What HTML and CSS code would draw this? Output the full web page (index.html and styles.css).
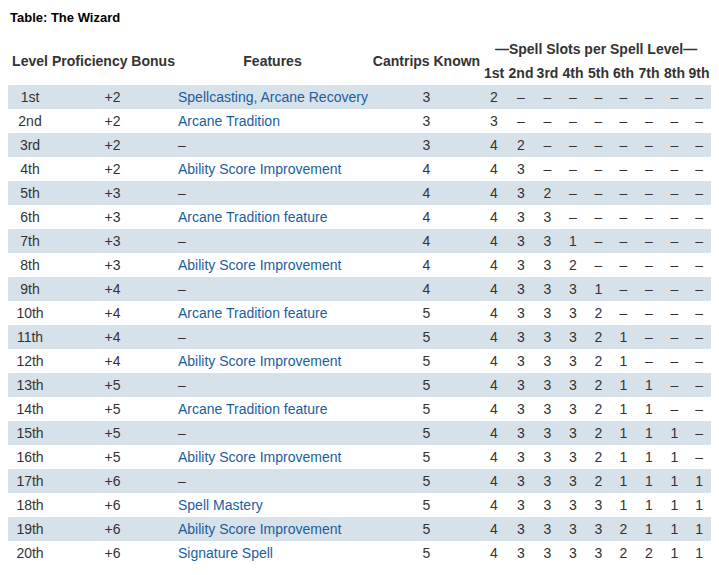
FILE: index.html
```html
<!DOCTYPE html>
<html>
<head>
<meta charset="utf-8">
<link rel="stylesheet" href="styles.css">
</head>
<body>
<div class="title">Table: The Wizard</div>
<table class="wiz">
<colgroup>
<col class="c-level"><col class="c-prof"><col class="c-feat"><col class="c-cant">
<col class="s1"><col class="s2"><col class="s3"><col class="s4"><col class="s5"><col class="s6"><col class="s7"><col class="s8"><col class="s9">
</colgroup>
<thead>
<tr><th rowspan="2">Level</th><th rowspan="2">Proficiency Bonus</th><th rowspan="2">Features</th><th rowspan="2">Cantrips Known</th><th colspan="9">—Spell Slots per Spell Level—</th></tr>
<tr><th>1st</th><th>2nd</th><th>3rd</th><th>4th</th><th>5th</th><th>6th</th><th>7th</th><th>8th</th><th>9th</th></tr>
</thead>
<tbody>
<tr><td>1st</td><td>+2</td><td class="feat link"><a>Spellcasting</a>, <a>Arcane Recovery</a></td><td>3</td><td>2</td><td>–</td><td>–</td><td>–</td><td>–</td><td>–</td><td>–</td><td>–</td><td>–</td></tr>
<tr><td>2nd</td><td>+2</td><td class="feat"><a>Arcane Tradition</a></td><td>3</td><td>3</td><td>–</td><td>–</td><td>–</td><td>–</td><td>–</td><td>–</td><td>–</td><td>–</td></tr>
<tr><td>3rd</td><td>+2</td><td class="feat">–</td><td>3</td><td>4</td><td>2</td><td>–</td><td>–</td><td>–</td><td>–</td><td>–</td><td>–</td><td>–</td></tr>
<tr><td>4th</td><td>+2</td><td class="feat"><a>Ability Score Improvement</a></td><td>4</td><td>4</td><td>3</td><td>–</td><td>–</td><td>–</td><td>–</td><td>–</td><td>–</td><td>–</td></tr>
<tr><td>5th</td><td>+3</td><td class="feat">–</td><td>4</td><td>4</td><td>3</td><td>2</td><td>–</td><td>–</td><td>–</td><td>–</td><td>–</td><td>–</td></tr>
<tr><td>6th</td><td>+3</td><td class="feat"><a>Arcane Tradition feature</a></td><td>4</td><td>4</td><td>3</td><td>3</td><td>–</td><td>–</td><td>–</td><td>–</td><td>–</td><td>–</td></tr>
<tr><td>7th</td><td>+3</td><td class="feat">–</td><td>4</td><td>4</td><td>3</td><td>3</td><td>1</td><td>–</td><td>–</td><td>–</td><td>–</td><td>–</td></tr>
<tr><td>8th</td><td>+3</td><td class="feat"><a>Ability Score Improvement</a></td><td>4</td><td>4</td><td>3</td><td>3</td><td>2</td><td>–</td><td>–</td><td>–</td><td>–</td><td>–</td></tr>
<tr><td>9th</td><td>+4</td><td class="feat">–</td><td>4</td><td>4</td><td>3</td><td>3</td><td>3</td><td>1</td><td>–</td><td>–</td><td>–</td><td>–</td></tr>
<tr><td>10th</td><td>+4</td><td class="feat"><a>Arcane Tradition feature</a></td><td>5</td><td>4</td><td>3</td><td>3</td><td>3</td><td>2</td><td>–</td><td>–</td><td>–</td><td>–</td></tr>
<tr><td>11th</td><td>+4</td><td class="feat">–</td><td>5</td><td>4</td><td>3</td><td>3</td><td>3</td><td>2</td><td>1</td><td>–</td><td>–</td><td>–</td></tr>
<tr><td>12th</td><td>+4</td><td class="feat"><a>Ability Score Improvement</a></td><td>5</td><td>4</td><td>3</td><td>3</td><td>3</td><td>2</td><td>1</td><td>–</td><td>–</td><td>–</td></tr>
<tr><td>13th</td><td>+5</td><td class="feat">–</td><td>5</td><td>4</td><td>3</td><td>3</td><td>3</td><td>2</td><td>1</td><td>1</td><td>–</td><td>–</td></tr>
<tr><td>14th</td><td>+5</td><td class="feat"><a>Arcane Tradition feature</a></td><td>5</td><td>4</td><td>3</td><td>3</td><td>3</td><td>2</td><td>1</td><td>1</td><td>–</td><td>–</td></tr>
<tr><td>15th</td><td>+5</td><td class="feat">–</td><td>5</td><td>4</td><td>3</td><td>3</td><td>3</td><td>2</td><td>1</td><td>1</td><td>1</td><td>–</td></tr>
<tr><td>16th</td><td>+5</td><td class="feat"><a>Ability Score Improvement</a></td><td>5</td><td>4</td><td>3</td><td>3</td><td>3</td><td>2</td><td>1</td><td>1</td><td>1</td><td>–</td></tr>
<tr><td>17th</td><td>+6</td><td class="feat">–</td><td>5</td><td>4</td><td>3</td><td>3</td><td>3</td><td>2</td><td>1</td><td>1</td><td>1</td><td>1</td></tr>
<tr><td>18th</td><td>+6</td><td class="feat"><a>Spell Mastery</a></td><td>5</td><td>4</td><td>3</td><td>3</td><td>3</td><td>3</td><td>1</td><td>1</td><td>1</td><td>1</td></tr>
<tr><td>19th</td><td>+6</td><td class="feat"><a>Ability Score Improvement</a></td><td>5</td><td>4</td><td>3</td><td>3</td><td>3</td><td>3</td><td>2</td><td>1</td><td>1</td><td>1</td></tr>
<tr><td>20th</td><td>+6</td><td class="feat"><a>Signature Spell</a></td><td>5</td><td>4</td><td>3</td><td>3</td><td>3</td><td>3</td><td>2</td><td>2</td><td>1</td><td>1</td></tr>
</tbody>
</table>
</body>
</html>
```
FILE: styles.css
```css
html, body {
  background: #ffffff;
}
body {
  margin: 8px;
  font-family: "Liberation Sans", Arial, sans-serif;
  color: #333333;
}
.title {
  font-size: 13px;
  font-weight: bold;
  color: #000000;
  line-height: 19px;
  padding-left: 2px;
  margin-bottom: 10px;
}
.wiz {
  width: 100%;
  table-layout: fixed;
  border-collapse: collapse;
  border-spacing: 0;
  font-size: 14px;
}
.c-level { width: 44px; }
.c-prof { width: 121px; }
.c-feat { width: 199px; }
.c-cant { width: 109px; }
.s1 { width: 26px; }
.s2 { width: 28px; }
.s3 { width: 25px; }
.s4 { width: 26px; }
.s5 { width: 25px; }
.s6 { width: 25px; }
.s7 { width: 26px; }
.s8 { width: 25px; }
.s9 { width: 24px; }
.wiz th {
  font-weight: bold;
  color: #333333;
  height: 24px;
  padding: 0;
  line-height: 16px;
  text-align: center;
  white-space: nowrap;
  vertical-align: middle;
}
.wiz td {
  height: 24px;
  padding: 0;
  line-height: 16px;
  text-align: center;
  vertical-align: middle;
  white-space: nowrap;
}
.wiz td.feat {
  text-align: left;
  padding-left: 5px;
}
.wiz td.link {
  color: #1a5ea0;
}
.wiz tbody tr:nth-child(odd) td {
  background: #d7e1ea;
}
.wiz a {
  color: #1a5ea0;
  text-decoration: none;
}
```
